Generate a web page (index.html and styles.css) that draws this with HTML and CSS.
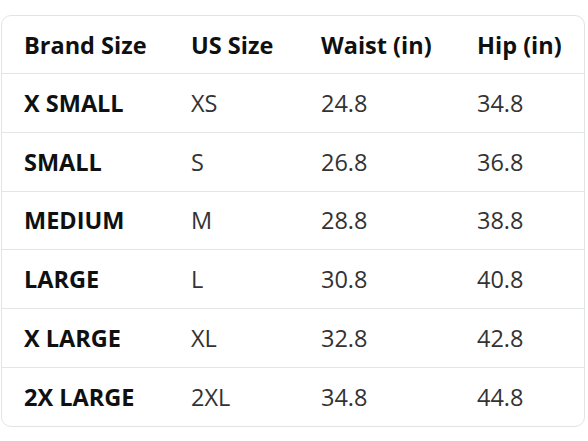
FILE: index.html
```html
<!DOCTYPE html>
<html>
<head>
<meta charset="utf-8">
<link rel="stylesheet" href="styles.css">
</head>
<body>
<div class="card">
  <table class="sizes">
    <colgroup>
      <col class="c1"><col class="c2"><col class="c3"><col class="c4">
    </colgroup>
    <thead>
      <tr><th>Brand Size</th><th>US Size</th><th>Waist (in)</th><th>Hip (in)</th></tr>
    </thead>
    <tbody>
      <tr><td class="brand">X SMALL</td><td>XS</td><td>24.8</td><td>34.8</td></tr>
      <tr><td class="brand">SMALL</td><td>S</td><td>26.8</td><td>36.8</td></tr>
      <tr><td class="brand">MEDIUM</td><td>M</td><td>28.8</td><td>38.8</td></tr>
      <tr><td class="brand">LARGE</td><td>L</td><td>30.8</td><td>40.8</td></tr>
      <tr><td class="brand">X LARGE</td><td>XL</td><td>32.8</td><td>42.8</td></tr>
      <tr><td class="brand">2X LARGE</td><td>2XL</td><td>34.8</td><td>44.8</td></tr>
    </tbody>
  </table>
</div>
</body>
</html>
```
FILE: styles.css
```css
html, body {
  margin: 0;
  padding: 0;
  background: #ffffff;
}
body {
  padding: 15px 2px 0 1px;
  font-family: "Open Sans", "Noto Sans", sans-serif;
}
.card {
  width: 584px;
  border: 1px solid #e1e4e4;
  border-radius: 10px;
  overflow: hidden;
  box-sizing: border-box;
}
.sizes {
  width: 100%;
  border-collapse: collapse;
  table-layout: fixed;
}
.c1 { width: 189px; }
.c2 { width: 130px; }
.c3 { width: 156px; }
.c4 { width: auto; }
.sizes th, .sizes td {
  text-align: left;
  font-size: 23.5px;
  padding: 0;
  vertical-align: middle;
  white-space: nowrap;
}
.sizes th:first-child, .sizes td:first-child {
  padding-left: 22px;
}
.sizes th {
  height: 57px;
  font-weight: 700;
  color: #0f1111;
  border-bottom: 1px solid #e3e6e6;
}
.sizes td {
  height: 57.8px;
  color: #333333;
  font-weight: 400;
  border-bottom: 1px solid #e3e6e6;
}
.sizes tbody tr:last-child td {
  border-bottom: none;
}
.sizes td.brand {
  font-weight: 700;
  color: #0f1111;
}
```
